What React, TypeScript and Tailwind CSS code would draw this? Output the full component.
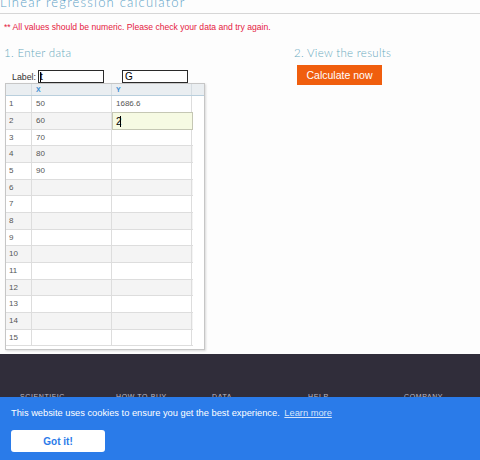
import React from "react";

const rows: { n: number; x: string; y: string }[] = Array.from({ length: 15 }, (_, i) => ({
  n: i + 1,
  x: ["50", "60", "70", "80", "90"][i] ?? "",
  y: i === 0 ? "1686.6" : "",
}));

export default function App() {
  return (
    <div className="relative w-[480px] bg-[#fdfdfd] font-['Liberation_Sans',Arial,sans-serif]">
      <div className="h-[14px] overflow-hidden border-b border-[#d6d6d6]">
        <div className="-mt-[6px] text-[13px] leading-[16px] font-light text-[#5c9fc6] font-['Lato','Open_Sans',sans-serif] tracking-[1.2px]">
          Linear regression calculator
        </div>
      </div>
      <div className="pl-[4px] pt-[8px] text-[8.6px] leading-[11px] text-[#e5213f]">
        ** All values should be numeric. Please check your data and try again.
      </div>
      <div className="flex pt-[13px]">
        <div className="w-[290px] pl-[4px]">
          <div className="text-[11.5px] leading-[14px] font-light text-[#6aaabd] font-['Lato','Open_Sans',sans-serif] tracking-[0.3px]">
            1. Enter data
          </div>
          <div className="flex items-center pt-[10px] pl-[8px] text-[8.8px] text-[#333]">
            <span className="leading-[12px]">Label:</span>
            <div className="ml-[2px] w-[66px] h-[13px] border border-[#2a2a2a] bg-white flex items-center pl-[1px] text-[10px] leading-[11px] text-black">
              t<span className="w-px h-[10px] bg-black -ml-[3px]" />
            </div>
            <div className="ml-[18px] w-[66px] h-[13px] border border-[#2a2a2a] bg-white flex items-center pl-[2px] text-[10px] leading-[11px] text-black">
              G
            </div>
          </div>
          <div className="ml-[1px] w-[200px] h-[267px] border border-[#c6c6c6] bg-white shadow-[1px_1px_2px_rgba(0,0,0,0.15)]">
            <div className="flex h-[12px] bg-[#eaeef1] border-b border-[#b9cfdd] text-[7px] leading-[11px] font-bold text-[#3c8ed3]">
              <div className="w-[26px] border-r border-[#d6dde2]" />
              <div className="w-[80px] pl-[4px] border-r border-[#d6dde2]">X</div>
              <div className="w-[80px] pl-[4px] border-r border-[#d6dde2]">Y</div>
              <div className="flex-1" />
            </div>
            {rows.map((r, i) => (
              <div
                key={r.n}
                className={`flex w-[187px] border-b border-[#dddddd] text-[8px] text-[#555] ${
                  i % 3 === 2 ? "h-[16px]" : "h-[17px]"
                } ${i % 2 === 1 ? "bg-[#f4f4f4]" : "bg-white"}`}
              >
                <div className="w-[26px] pl-[3px] flex items-center border-r border-[#dddddd]">{r.n}</div>
                <div className="w-[80px] pl-[4px] flex items-center border-r border-[#dddddd]">{r.x}</div>
                {i === 1 ? (
                  <div className="w-[81px] flex items-center pl-[3px] -my-px h-[18px] border border-[#c5c7b4] bg-[#f6fae3] text-[10px] text-black">
                    2<span className="w-px h-[11px] bg-black -ml-[2px]" />
                  </div>
                ) : (
                  <div className="w-[80px] pl-[4px] flex items-center border-r border-[#dddddd]">{r.y}</div>
                )}
              </div>
            ))}
          </div>
        </div>
        <div className="flex-1 pl-[4px]">
          <div className="text-[11.5px] leading-[14px] font-light text-[#6aaabd] font-['Lato','Open_Sans',sans-serif] tracking-[0.3px]">
            2. View the results
          </div>
          <button className="mt-[5px] ml-[3px] w-[85px] h-[20px] bg-[#f05e0e] text-white text-[10.5px] leading-[20px] text-center">
            Calculate now
          </button>
        </div>
      </div>
      <div className="mt-[4px] h-[140px] bg-[#302d3a] pt-[39px]">
        <div className="flex text-[7px] leading-[8px] text-[#bdbac4] tracking-[0.6px]">
          <div className="w-[96px] pl-[20px]">SCIENTIFIC</div>
          <div className="w-[96px] pl-[20px]">HOW TO BUY</div>
          <div className="w-[96px] pl-[20px]">DATA</div>
          <div className="w-[96px] pl-[20px]">HELP</div>
          <div className="w-[96px] pl-[20px]">COMPANY</div>
        </div>
      </div>
      <div className="fixed left-0 top-[397px] w-[480px] h-[63px] bg-[#2a7be9] px-[11px] pt-[10px]">
        <div className="text-[9.3px] leading-[12px] text-white">
          This website uses cookies to ensure you get the best experience.{" "}
          <span className="ml-[2px] underline text-[#d6e5fb]">Learn more</span>
        </div>
        <button className="mt-[11px] w-[94px] h-[22px] rounded-[3px] bg-white text-[10px] font-bold text-[#2a7be9]">
          Got it!
        </button>
      </div>
    </div>
  );
}
